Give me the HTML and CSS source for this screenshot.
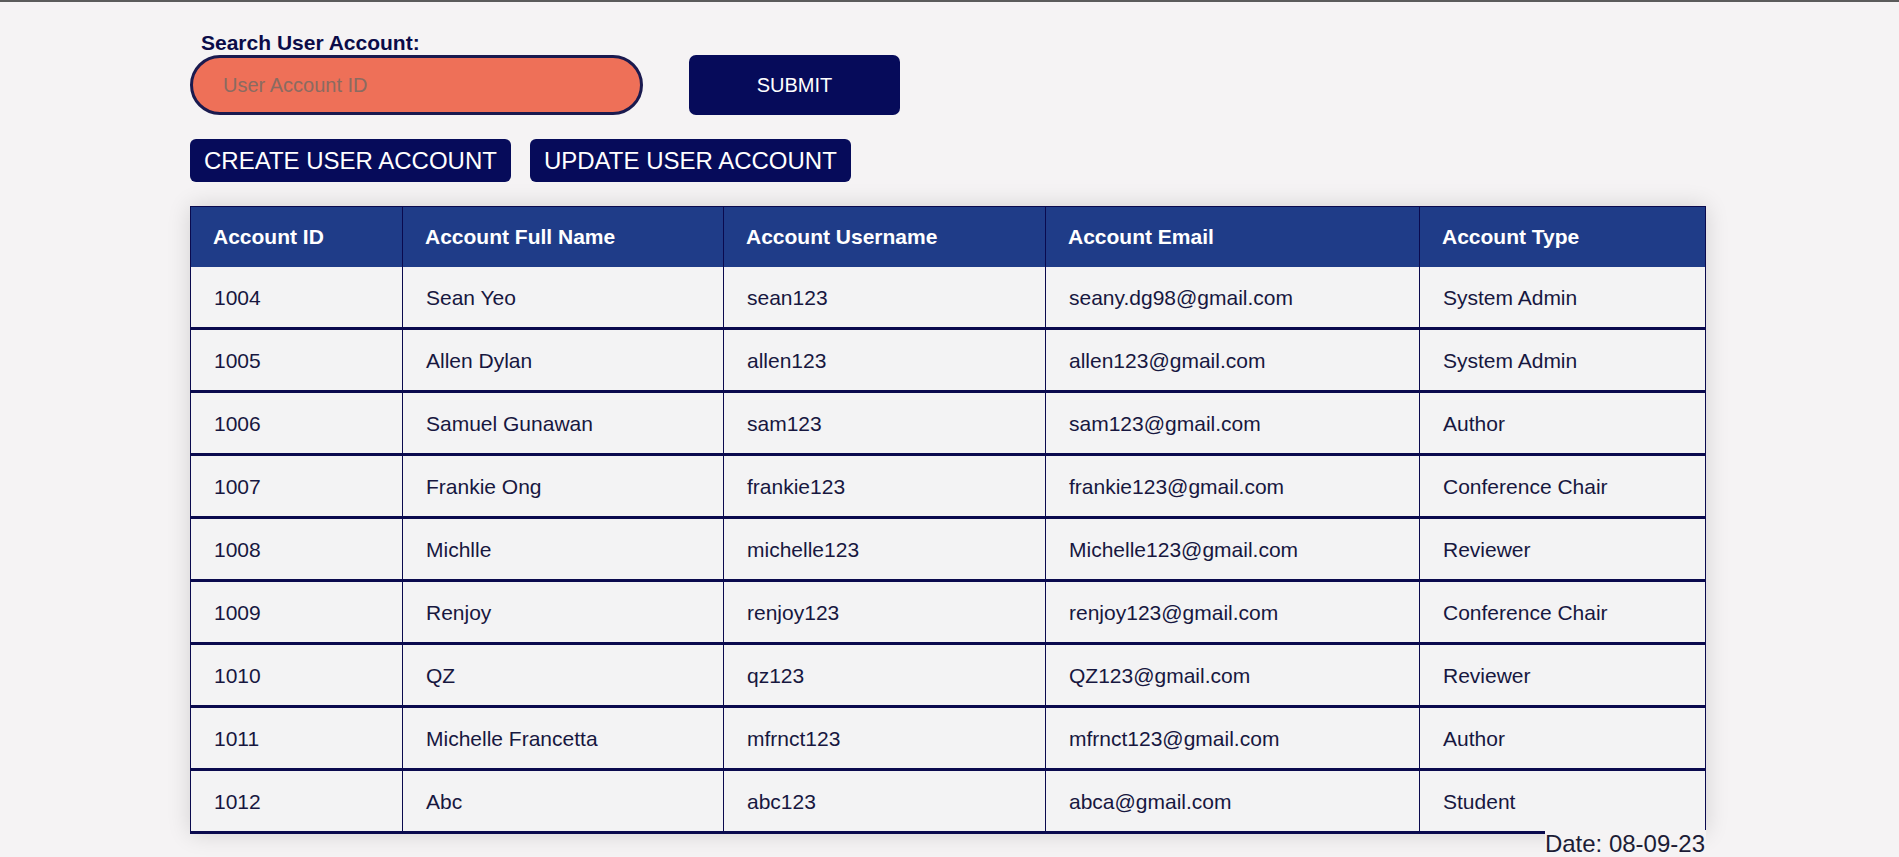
FILE: index.html
```html
<!DOCTYPE html>
<html lang="en">
<head>
<meta charset="utf-8">
<title>User Accounts</title>
<link rel="stylesheet" href="styles.css">
</head>
<body>
<div class="topbar"></div>
<main class="page">
  <form class="search">
    <label class="search-label" for="acc">Search User Account:</label>
    <div class="search-row">
      <input class="search-input" id="acc" type="text" placeholder="User Account ID">
      <button class="submit-btn" type="button">SUBMIT</button>
    </div>
  </form>
  <div class="actions">
    <button class="action-btn" type="button">CREATE USER ACCOUNT</button>
    <button class="action-btn" type="button">UPDATE USER ACCOUNT</button>
  </div>
  <table class="accounts">
    <thead>
      <tr>
        <th class="c1">Account ID</th>
        <th class="c2">Account Full Name</th>
        <th class="c3">Account Username</th>
        <th class="c4">Account Email</th>
        <th class="c5">Account Type</th>
      </tr>
    </thead>
    <tbody>
      <tr><td>1004</td><td>Sean Yeo</td><td>sean123</td><td>seany.dg98@gmail.com</td><td>System Admin</td></tr>
      <tr><td>1005</td><td>Allen Dylan</td><td>allen123</td><td>allen123@gmail.com</td><td>System Admin</td></tr>
      <tr><td>1006</td><td>Samuel Gunawan</td><td>sam123</td><td>sam123@gmail.com</td><td>Author</td></tr>
      <tr><td>1007</td><td>Frankie Ong</td><td>frankie123</td><td>frankie123@gmail.com</td><td>Conference Chair</td></tr>
      <tr><td>1008</td><td>Michlle</td><td>michelle123</td><td>Michelle123@gmail.com</td><td>Reviewer</td></tr>
      <tr><td>1009</td><td>Renjoy</td><td>renjoy123</td><td>renjoy123@gmail.com</td><td>Conference Chair</td></tr>
      <tr><td>1010</td><td>QZ</td><td>qz123</td><td>QZ123@gmail.com</td><td>Reviewer</td></tr>
      <tr><td>1011</td><td>Michelle Francetta</td><td>mfrnct123</td><td>mfrnct123@gmail.com</td><td>Author</td></tr>
      <tr><td>1012</td><td>Abc</td><td>abc123</td><td>abca@gmail.com</td><td>Student</td></tr>
    </tbody>
  </table>
  <div class="date-row"><span class="date">Date: 08-09-23</span></div>
</main>
</body>
</html>
```

FILE: styles.css
```css
* { box-sizing: border-box; }

html, body {
  margin: 0;
  padding: 0;
  background: #f5f3f4;
  font-family: "Liberation Sans", Arial, sans-serif;
}

.topbar {
  height: 2px;
  background: #5b5b5b;
}

.page {
  width: 1516px;
  margin-left: 190px;
  padding-top: 29px;
}

.search {
  display: flex;
  flex-direction: column;
  margin: 0;
}

.search-label {
  font-size: 21px;
  line-height: 24px;
  font-weight: bold;
  color: #0b0b48;
  padding-left: 11px;
}

.search-row {
  display: flex;
  gap: 46px;
  align-items: flex-start;
}

.search-input {
  width: 453px;
  height: 60px;
  border: 3px solid #1a1a4f;
  border-radius: 30px;
  background: #ee7058;
  padding: 0 0 0 30px;
  font-family: "Liberation Sans", Arial, sans-serif;
  font-size: 20px;
  color: #222;
  outline: none;
}

.search-input::placeholder {
  color: #8a6b61;
}

.submit-btn {
  width: 211px;
  height: 60px;
  border: none;
  border-radius: 7px;
  background: #060b5a;
  color: #ffffff;
  font-family: "Liberation Sans", Arial, sans-serif;
  font-size: 20px;
}

.actions {
  display: flex;
  gap: 19px;
  margin-top: 24px;
}

.action-btn {
  height: 43px;
  padding: 0 14px;
  border: none;
  border-radius: 6px;
  background: #060b5a;
  color: #ffffff;
  font-family: "Liberation Sans", Arial, sans-serif;
  font-size: 24px;
  line-height: 43px;
}

.accounts {
  margin-top: 24px;
  width: 1516px;
  table-layout: fixed;
  border-collapse: separate;
  border-spacing: 0;
  background: #f3f3f4;
  box-shadow: 0 0 22px rgba(0, 0, 0, 0.14);
}

.accounts th,
.accounts td {
  padding: 18px 10px 18px 23px;
  line-height: 24px;
  font-size: 21px;
  text-align: left;
  border-right: 1px solid #0a0a4e;
  white-space: nowrap;
  overflow: hidden;
}

.accounts th:first-child,
.accounts td:first-child {
  border-left: 1px solid #0a0a4e;
}

.accounts th {
  background: #1f3c88;
  color: #ffffff;
  font-weight: bold;
  border-top: 1px solid #0a0a4e;
  padding-left: 22px;
}

.accounts td {
  color: #17173f;
  border-bottom: 3px solid #0a0a4e;
  padding-top: 19px;
  padding-bottom: 17px;
}

.c1 { width: 213px; }
.c2 { width: 321px; }
.c3 { width: 322px; }
.c4 { width: 374px; }
.c5 { width: 286px; }

.date-row {
  display: flex;
  justify-content: flex-end;
  margin-top: -4px;
}

.date {
  position: relative;
  background: #f5f3f4;
  font-size: 24px;
  color: #1c1c36;
  padding-right: 1px;
}
```
